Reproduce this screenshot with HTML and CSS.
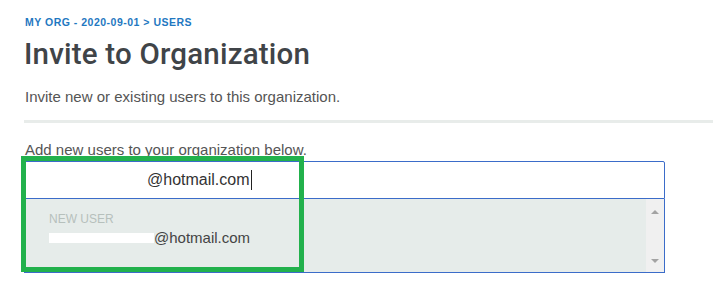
FILE: index.html
```html
<!DOCTYPE html>
<html lang="en">
<head>
    <meta charset="UTF-8" />
    <title>Invite to Organization</title>
    <link rel="stylesheet" href="styles.css">
</head>
<body>
    <div class="page">
        <div class="crumbs">MY ORG - 2020-09-01 &gt; USERS</div>
        <h1>Invite to Organization</h1>
        <p class="lead">Invite new or existing users to this organization.</p>
        <hr class="rule" />

        <p class="hint">Add new users to your organization below.</p>

        <div class="picker">
            <div class="field">
                <span class="hidden-part"></span><span>@hotmail.com</span><span class="caret"></span>
            </div>
            <div class="options">
                <div class="option">
                    <div class="option-label">NEW USER</div>
                    <div class="option-text"><span class="redact"></span>@hotmail.com</div>
                </div>
                <div class="scrollbar">
                    <span class="arrow up"></span>
                    <span class="arrow down"></span>
                </div>
            </div>
            <div class="highlight"></div>
        </div>
    </div>
</body>
</html>
```

FILE: styles.css
```css
body {
    margin: 0;
    background: #fff;
    font-family: 'Liberation Sans', Arial, sans-serif;
    color: #555;
}

.page {
    padding: 16px 0 0 24px;
}

.crumbs {
    padding-left: 1px;
    font-size: 10.5px;
    font-weight: bold;
    letter-spacing: 0.5px;
    color: #1f78c1;
}

h1 {
    margin: 9px 0 0 0;
    font-family: Roboto, 'Liberation Sans', sans-serif;
    font-size: 29.5px;
    font-weight: 500;
    letter-spacing: 0.2px;
    color: #404448;
}

.lead {
    margin: 17px 0 0 1px;
    font-size: 15px;
    color: #555;
}

.rule {
    margin: 15px 0 0 0;
    height: 3px;
    border: none;
    background: #e8ecea;
}

.hint {
    margin: 18px 0 0 1px;
    font-size: 15px;
    color: #555;
}

.picker {
    position: relative;
    width: 641px;
    margin-top: 3px;
}

.field {
    height: 36px;
    display: flex;
    align-items: center;
    border: 1px solid #3b6cc9;
    border-radius: 2px 2px 0 0;
    font-size: 16px;
    color: #333;
}

.hidden-part {
    width: 122px;
}

.caret {
    width: 1px;
    height: 20px;
    margin-left: 1px;
    background: #222;
}

.options {
    display: flex;
    height: 73px;
    border: 1px solid #3b6cc9;
    border-top: none;
    background: #e6ecea;
}

.option {
    flex: 1;
    padding: 13px 0 0 24px;
}

.option-label {
    font-size: 12px;
    color: #b6c0bc;
}

.option-text {
    display: flex;
    align-items: center;
    margin-top: 3px;
    font-size: 15px;
    color: #444;
}

.redact {
    width: 105px;
    height: 10px;
    background: #fff;
}

.scrollbar {
    width: 18px;
    display: flex;
    flex-direction: column;
    justify-content: space-between;
    align-items: center;
    padding: 11px 0 9px;
    background: #f0f0f0;
}

.arrow {
    width: 0;
    height: 0;
    border-left: 4px solid transparent;
    border-right: 4px solid transparent;
}

.arrow.up {
    border-bottom: 4px solid #a3a3a3;
}

.arrow.down {
    border-top: 4px solid #a3a3a3;
}

/* annotation box drawn over the picker */
.highlight {
    position: absolute;
    left: -3px;
    top: -5px;
    width: 273px;
    height: 106px;
    border: 5px solid #22b14c;
}
```
